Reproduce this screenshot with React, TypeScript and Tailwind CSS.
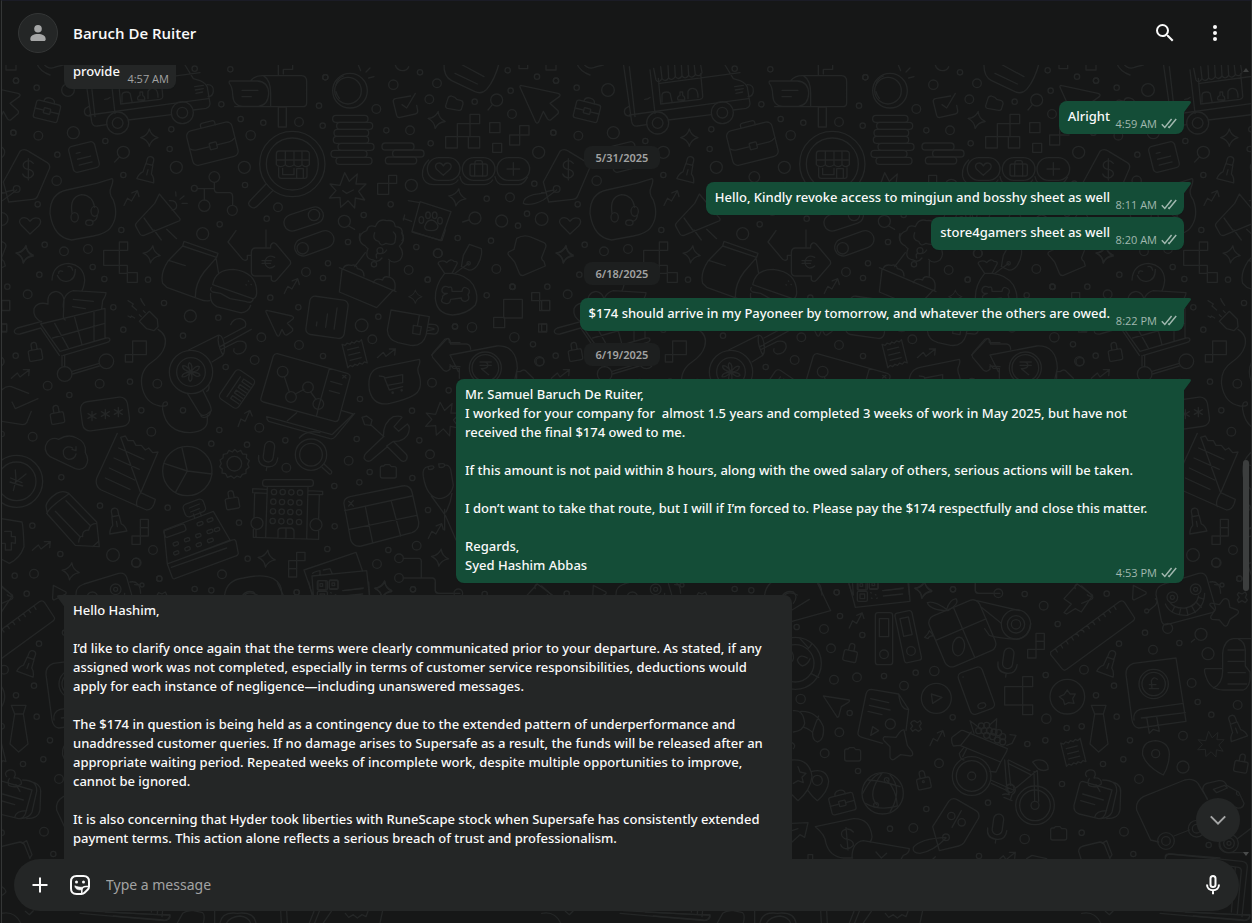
import React from "react";

/* ---------- wallpaper ---------- */

type Dot = [number, number, number];
type Box = [number, number, number, number, number?];

function Dots({ items }: { items: Dot[] }) {
  return (
    <>
      {items.map(([x, y, r], i) => (
        <circle key={i} cx={x} cy={y} r={r} />
      ))}
    </>
  );
}

function Boxes({ items }: { items: Box[] }) {
  return (
    <>
      {items.map(([x, y, w, h, r], i) => (
        <rect key={i} x={x} y={y} width={w} height={h} rx={r ?? 0} />
      ))}
    </>
  );
}

function Sparkle({ x, y, s = 26, a = 0 }: { x: number; y: number; s?: number; a?: number }) {
  return (
    <path
      transform={`translate(${x} ${y}) rotate(${a}) scale(${s / 26})`}
      d="M0-26Q5-6 26 0Q5 6 0 26Q-5 6-26 0Q-5-6 0-26Z"
    />
  );
}

function Trend({ x, y, a = 0 }: { x: number; y: number; a?: number }) {
  return (
    <path transform={`translate(${x} ${y}) rotate(${a})`} d="M-28 13L-10-3L-2 9L26-13M8-13L26-13L24 5" />
  );
}

function Padlock({ x, y, a = 0 }: { x: number; y: number; a?: number }) {
  return (
    <path
      transform={`translate(${x} ${y}) rotate(${a})`}
      d="M-15-8H15Q20-8 20-3V20Q20 25 15 25H-15Q-20 25-20 20V-3Q-20-8-15-8ZM-8-8V-22Q-8-30 0-30Q8-30 8-22V-8"
    />
  );
}

function Mic({ x, y }: { x: number; y: number }) {
  return (
    <g transform={`translate(${x} ${y}) rotate(8)`}>
      <rect x={-15} y={-44} width={30} height={62} rx={15} />
      <path d="M-29 2Q-29 32 0 32Q29 32 29 2M0 32V44" />
    </g>
  );
}

function MiniCase({ x, y, a = 14 }: { x: number; y: number; a?: number }) {
  return (
    <g transform={`translate(${x} ${y}) rotate(${a})`}>
      <rect x={-37} y={-26} width={74} height={54} rx={7} />
      <path d="M-37 0H-10M10 0H37M-16-26Q-16-40 0-40Q16-40 16-26" />
      <rect x={-10} y={-8} width={20} height={16} rx={2} />
    </g>
  );
}

function Ticket({ x, y, a = -14 }: { x: number; y: number; a?: number }) {
  return (
    <path
      transform={`translate(${x} ${y}) rotate(${a})`}
      d="M-30-36L-22-31L-15-36L-7-31L0-36L7-31L15-36L22-31L30-36V36L22 31L15 36L7 31L0 36L-7 31L-15 36L-22 31L-30 36ZM-18-16H16M-18 0H16M-18 16H16"
    />
  );
}

function PushPin({ x, y, a = 14 }: { x: number; y: number; a?: number }) {
  return (
    <path
      transform={`translate(${x} ${y}) rotate(${a})`}
      d="M-11-20H11L13 6Q24 14 26 30H-26Q-24 14-13 6ZM-10-20V-34Q-10-44 0-44Q10-44 10-34V-20M0-4V12"
    />
  );
}

function MiniFolder({ x, y }: { x: number; y: number }) {
  return (
    <path
      transform={`translate(${x} ${y})`}
      d="M-24-10Q-24-16-18-16H-14L-10-20H4L9-14H18Q24-14 24-8V14Q24 20 18 20H-18Q-24 20-24 14Z"
    />
  );
}

function Burst({ x, y, s = 1 }: { x: number; y: number; s?: number }) {
  return (
    <path
      transform={`translate(${x} ${y}) scale(${s})`}
      d="M-8-56L6-30L30-52L26-22L56-22L34 0L52 26L24 20L22 50L2 28L-20 48L-22 18L-54 20L-34-2L-52-22L-22-18Z"
    />
  );
}

function Doodles() {
  return (
    <g id="doodles" fill="none" stroke="#242626" strokeWidth={4} strokeLinejoin="round" strokeLinecap="round">
      <g transform="scale(0.33333)">
        <Dots
          items={[
            [48, 242, 8], [110, 263, 8], [204, 270, 19], [584, 206, 8], [691, 208, 8], [664, 313, 8], [976, 232, 8],
            [1180, 254, 14], [957, 317, 8], [1129, 327, 13], [897, 366, 13], [790, 368, 8], [722, 357, 8],
            [968, 377, 8], [752, 406, 14], [514, 388, 8], [509, 447, 8], [220, 398, 18], [115, 407, 13], [40, 398, 8],
            [316, 423, 8], [172, 464, 8], [170, 542, 14], [370, 525, 8], [529, 502, 18], [733, 502, 18], [735, 555, 8],
            [1159, 391, 8], [1230, 391, 13], [1234, 556, 18], [1172, 613, 8], [1091, 645, 8], [834, 622, 13],
            [800, 656, 8], [659, 673, 8], [608, 701, 18], [364, 690, 8], [113, 613, 8], [5, 657, 19],
            [643, 531, 16], [583, 565, 9], [613, 617, 17], [697, 631, 15], [370, 457, 18], [1033, 664, 18],
            [353, 369, 33], [353, 369, 16], [547, 338, 33], [547, 338, 16], [877, 492, 98], [877, 492, 78],
            [1050, 272, 52], [1044, 272, 40], [50, 567, 10], [942, 645, 17],
          ]}
        />
        <Boxes
          items={[
            [18, 180, 30, 30], [998, 346, 106, 21, 10], [1010, 367, 108, 21, 10], [1002, 388, 104, 21, 10],
            [1000, 409, 106, 21, 10], [1014, 430, 108, 21, 10], [993, 451, 108, 21, 10], [1008, 472, 108, 21, 10],
            [1146, 429, 96, 21, 10], [1178, 450, 94, 21, 10], [1156, 471, 94, 21, 10], [1166, 526, 24, 24],
            [1133, 550, 33, 33], [835, 321, 24, 60],
          ]}
        />
        <path d="M110 190Q120 215 150 225M130 190Q145 212 170 200L190 195" />
        {/* food truck */}
        <path d="M250 190L275 365Q278 380 292 378L320 374M385 360L514 344M580 330L618 325Q630 322 630 310L622 262Q618 250 600 242L580 236L555 195M268 200L285 350M330 210L345 340M268 345L520 310L625 296M355 235L362 312L480 298Q490 296 488 286L482 220M360 250L600 218M622 254Q642 254 640 274Q638 290 624 290M266 320Q250 325 254 340Q258 350 272 348M584 260L610 256M586 270L610 266M588 280L608 276M314 298Q325 298 330 292M366 306V284Q368 276 380 276Q392 276 392 288L396 304M414 300Q410 290 420 286V276H428V286Q436 290 434 300ZM444 296V274Q450 262 462 266Q474 268 474 292" />
        <path d="M341 205L348 240Q356 252 366 236Q376 248 386 234Q396 244 406 230Q416 242 426 228Q436 240 446 226Q456 238 466 224Q480 232 486 218L482 195M362 200L366 236M384 197L386 234M404 195L406 230M424 193L426 228M444 191L446 226M462 189L466 224" />
        {/* mail box */}
        <path d="M690 243H772Q805 245 806 280Q805 316 775 319H728Q700 318 698 285Q698 262 688 250Q686 243 690 243ZM752 242Q765 226 790 227H905Q920 228 920 245V308Q920 320 908 320H704M790 227Q812 240 812 280V320M726 271H774M726 290H754M835 195V226M850 222V208H878V195" />
        <path d="M1075 195L1082 212M1098 216L1110 204M1106 234L1122 230M1008 255Q1012 235 1030 228M1018 295Q1010 285 1008 275" />
        <MiniCase x={141} y={333} />
        <Sparkle x={448} y={413} />
        {/* large briefcase */}
        <g transform="translate(637 430) rotate(-14)">
          <rect x={-70} y={-52} width={140} height={106} rx={16} />
          <path d="M-70 0Q-60 8-50 8H-10M12 8H50Q60 8 70 0M-22-52V-60Q-22-66-14-66H14Q22-66 22-60V-52" />
          <rect x={-10} y={-2} width={22} height={20} rx={3} />
        </g>
        {/* note */}
        <g transform="translate(252 471) rotate(-14)">
          <rect x={-40} y={-40} width={80} height={80} rx={12} />
          <path d="M-20-16H-8M-20 2H20M-20 20H20" />
        </g>
        <path d="M358 471L344 486M798 552L752 600Q740 612 752 620Q762 628 772 618L818 572" />
        {/* shop in lens */}
        <path d="M838 453H918Q928 453 928 462V494Q916 506 906 494Q896 506 882 494Q866 506 856 494Q840 506 829 494V462Q829 453 838 453ZM829 480H928M856 453V494M882 453V494M906 453V494M836 503V528Q836 535 844 535H914Q921 535 921 528V503M848 505V524H882V505M890 535V506H910V535" />
        <PushPin x={443} y={513} />
        {/* price tag */}
        <path d="M60 454Q72 444 86 454L142 488Q152 494 148 506L112 590Q108 598 98 598L26 606L10 546ZM100 490Q92 480 84 482Q68 486 70 498Q74 508 86 508Q102 512 100 524Q94 534 84 534Q72 532 68 522M85 476V540M5 578L42 570" />
        <path d="M592 566H643M643 547V568Q644 578 654 578H690Q698 580 698 590V616M613 566V600" />
        {/* support bubble */}
        <path d="M336 536Q342 538 334 560Q324 580 340 600Q358 650 330 685Q318 700 280 708L215 720Q160 712 150 640Q150 580 200 570L290 550ZM216 640Q208 590 245 584Q278 586 284 622" />
        <ellipse cx={224} cy={652} rx={11} ry={14} />
        <ellipse cx={284} cy={634} rx={11} ry={15} />
        <ellipse cx={268} cy={668} rx={11} ry={8} />
        <path d="M292 645Q292 660 278 664" />
        <Trend x={393} y={594} a={-22} />
        {/* megaphone */}
        <path d="M478 582L540 656Q542 662 534 664L432 706Q424 708 420 702L408 680Q404 674 410 668L464 610ZM432 654L458 690M462 690L484 720M500 688L530 716M508 602Q528 600 530 616Q530 630 516 630M527 576L528 588M540 598L552 588M546 610H562" />
        <path d="M90 702L64 676Q52 662 66 654Q80 650 90 664Q100 650 116 655Q128 664 116 678Z" />
        <Burst x={1042} y={574} />
        <path d="M1028 572L1040 580L1060 570M1046 678L1064 688" />
        <rect x={850} y={632} width={122} height={50} rx={25} transform="rotate(-18 911 657)" />
        <path d="M1210 655L1235 664M1214 645L1210 660M1225 602L1260 608" />
        {/* poodle hair */}
        <path d="M1080 720Q1076 700 1100 692Q1104 672 1126 680Q1136 654 1160 662Q1184 658 1186 680Q1210 680 1206 702Q1214 712 1206 722" />
      </g>

      <g transform="translate(300 0) scale(0.33333)">
        <path d="M332 288L286 296Q278 298 280 306L290 346Q292 354 300 352L346 342Q354 340 353 332L350 316M306 314L320 324L346 280M286 195Q290 210 306 212Q322 212 326 200" />
        <Dots items={[[360, 217, 8], [76, 232, 8]]} />
      </g>

      <g transform="translate(420 60) scale(0.33333)">
        <Dots
          items={[
            [263, 31, 8], [351, 50, 8], [51, 70, 13], [28, 118, 13], [272, 92, 8], [230, 120, 18], [276, 162, 13],
            [164, 125, 8], [356, 277, 18], [32, 250, 8], [343, 371, 8], [270, 412, 13], [200, 416, 8], [321, 461, 8],
            [165, 474, 18], [245, 483, 18], [294, 497, 8], [113, 534, 8], [213, 542, 8], [54, 580, 13],
            [229, 627, 13], [23, 659, 8], [278, 681, 8], [400, 218, 8], [408, 62, 8],
          ]}
        />
        <Boxes
          items={[
            [150, 163, 29, 28], [77, 230, 35, 34], [145, 230, 34, 34], [112, 191, 38, 39], [209, 188, 31, 30],
            [218, 250, 27, 27], [299, 197, 28, 28], [269, 225, 30, 30], [297, 0, 26, 26],
            [22, 293, 98, 68, 34], [127, 293, 98, 68, 34], [231, 293, 98, 68, 34], [150, 312, 52, 36, 6],
          ]}
        />
        <path d="M26 300Q4 320 8 350Q14 374 40 374H90Q106 372 114 360M120 350Q124 374 144 374H194Q210 372 218 360M225 350Q230 374 248 374H296Q312 372 322 352" />
        <path d="M70 346L50 328Q42 316 52 310Q64 306 70 318Q76 306 88 310Q98 316 90 328ZM280 308V346M261 327H299M165 312V306Q166 302 170 302H182Q186 302 187 306V312M164 312V348M188 312V348" />
        <path d="M72 10Q70 50 95 62L165 95Q185 104 200 88Q225 60 240 0M105 40L172 72M122 12L192 50" />
        <path d="M300 82Q298 75 306 77L414 100Q424 103 418 110L390 130L414 152Q418 160 410 164L392 180Q386 182 382 176L370 154L356 186Q350 194 346 184Z" />
        <path d="M84 115Q86 108 94 108L104 112L110 118L124 122Q130 124 129 132L124 148Q122 152 116 151L82 145Q76 143 77 137ZM217 134L204 150M146 480L128 486" />
        <Sparkle x={50} y={180} a={10} />
        <Sparkle x={112} y={412} a={10} />
        <Sparkle x={434} y={584} a={10} />
        {/* paw card */}
        <path d="M0 425L93 455L62 542L-24 514L0 425M14 500Q20 480 34 480Q48 482 54 498Q54 512 34 512Q14 512 14 500Z" />
        <ellipse cx={4} cy={480} rx={7} ry={10} />
        <ellipse cx={24} cy={466} rx={7} ry={10} />
        <ellipse cx={44} cy={466} rx={7} ry={10} />
        <ellipse cx={60} cy={482} rx={7} ry={10} />
        <path d="M290 535Q312 522 335 532L372 548Q380 552 377 562L366 590Q362 598 372 604L376 618L310 646Q302 648 298 640L284 606L272 592Q260 582 266 576L282 568Z" />
        <path d="M148 553L184 566Q188 590 172 616Q160 632 146 630L124 620L130 586ZM146 610L105 640" />
        <circle cx={146} cy={610} r={5} />
        <path d="M310 430Q310 412 340 404L380 398M310 430Q330 440 370 420L410 390" />
      </g>

      <g transform="translate(0 230) scale(0.33333)">
        <Dots
          items={[
            [134, 44, 8], [192, 64, 13], [264, 57, 13], [278, 111, 8], [118, 134, 8], [22, 170, 8], [83, 193, 13],
            [313, 147, 8], [444, 149, 8], [340, 232, 8], [492, 219, 8], [370, 299, 8], [549, 317, 8], [571, 258, 18],
            [655, 263, 8], [784, 322, 13], [764, 390, 13], [677, 411, 8], [472, 461, 13], [390, 455, 8],
            [299, 461, 13], [47, 377, 8], [143, 467, 13], [208, 495, 8], [424, 541, 8], [549, 541, 8], [454, 605, 13],
            [98, 620, 13], [658, 600, 8], [778, 593, 13], [741, 644, 8], [634, 641, 8], [856, 631, 8], [811, 203, 8],
            [895, 232, 8], [984, 100, 8], [918, 126, 13], [969, 144, 8], [1044, 36, 8], [1122, 103, 8],
            [1249, 51, 8], [1313, 70, 13], [1226, 120, 13], [1283, 149, 8], [1365, 289, 8], [1135, 260, 8],
            [1085, 286, 19], [1117, 328, 13], [897, 345, 13], [969, 378, 8], [1296, 458, 13], [1346, 481, 8],
            [1080, 507, 8], [1236, 542, 8], [1070, 627, 8], [1258, 631, 8], [1290, 673, 13], [1046, 692, 13],
            [859, 713, 13], [0, 395, 12], [5, 612, 8],
            [194, 432, 22], [319, 394, 22], [573, 426, 65], [573, 426, 43], [848, 425, 16], [873, 501, 16],
            [924, 472, 16], [955, 522, 16], [933, 674, 47], [933, 674, 34], [908, 55, 17], [1140, 62, 9],
          ]}
        />
        <Boxes
          items={[
            [358, 36, 25, 25], [311, 61, 47, 45], [358, 106, 24, 24], [382, 128, 30, 29], [5, 211, 24, 30],
            [5, 282, 15, 22], [398, 333, 41, 41], [376, 374, 22, 22],
          ]}
        />
        <Sparkle x={74} y={72} a={8} />
        <Sparkle x={455} y={73} a={8} />
        <Sparkle x={1246} y={200} s={20} />
        {/* cart */}
        <path d="M156 150Q158 104 205 100Q252 106 254 150Q252 172 246 182M176 130Q176 120 188 124M204 110Q214 106 218 120M172 136Q180 156 200 154Q226 152 226 118M124 276Q98 262 102 236Q112 214 144 222Q140 188 168 184Q190 188 192 210L190 262M190 232Q188 190 220 182L318 188Q318 196 308 212L305 236M220 208L280 214M218 230L256 236M122 282L315 235V322M190 262Q192 270 196 270M125 274L52 294Q40 300 44 308Q48 314 60 312L122 294L178 376M122 282L180 364L318 324Q330 322 330 330Q328 336 320 338L190 376M164 280L206 356M224 262L246 344M282 246V332M158 324L314 280M186 376V408M194 376V410M216 424L298 400M218 432L298 408" />
        {/* plug and cable */}
        <path d="M418 274L448 244L472 268L474 290L462 302L440 296ZM474 298Q504 316 494 350Q486 376 456 396Q420 420 425 465Q434 520 480 528Q510 530 500 516Q486 512 488 538Q498 606 570 608Q624 604 622 570V556M384 212L400 222L396 228L410 240M422 206L428 218L424 212L434 226M384 258L392 262L394 258L404 264M418 254L424 260M430 242L436 248" />
        {/* paper bag and burger */}
        <path d="M552 34L654 70L650 82L548 48ZM548 48L505 92Q480 130 488 160L500 172L600 208Q612 214 630 212M508 92L556 107M650 82L612 126Q586 160 586 200M648 84L656 130" />
        <path d="M638 164Q646 118 700 118Q772 126 770 190Q768 206 758 206ZM634 172Q628 180 638 186L662 190L690 206L736 214Q758 222 760 206M632 190Q628 218 650 230L720 248Q744 250 752 226M738 164L739 165M745 153L746 154M753 163L754 164" />
        {/* arrows */}
        <path d="M708 2L684 36L728 88Q736 94 742 88V76H754M798 0V50M766 54H812V46Q818 34 828 42L870 92Q874 98 870 104L830 150Q822 158 814 150V138H768Q754 138 754 126V66Q756 54 766 54ZM824 82Q804 72 796 90Q792 108 808 114Q818 114 824 108M786 92H814M786 100H812" />
        <Trend x={874} y={168} a={-22} />
        <Trend x={62} y={432} />
        <Trend x={1160} y={370} />
        <Trend x={733} y={565} a={-28} />
        <rect x={882} y={14} width={122} height={52} rx={26} transform="rotate(-20 943 40)" />
        {/* plant crate */}
        <path d="M1018 113L1188 185M1026 118L1018 186L1130 233L1180 180M1030 114Q1036 102 1054 106Q1070 102 1072 116Q1092 118 1092 138M1120 158Q1126 142 1148 150Q1150 136 1170 142Q1190 150 1184 180M1064 110L1096 68M1168 138V92M1080 10Q1072 36 1096 48Q1100 54 1104 56Q1092 86 1120 90Q1134 100 1146 84M1206 8Q1218 32 1198 48Q1216 70 1200 90Q1180 104 1166 88M1124 8Q1116 30 1136 34Q1142 52 1158 40Q1188 50 1186 26Q1190 14 1180 6M1130 84Q1126 70 1134 70M1146 70Q1154 70 1160 60" />
        <path d="M1236 6L1326 32L1336 0" />
        {/* sack */}
        <path d="M1318 106Q1310 98 1320 94Q1334 90 1340 98Q1352 84 1362 94Q1376 94 1370 104L1356 130L1334 130ZM1334 130Q1305 165 1306 205Q1310 252 1358 255Q1402 252 1426 225Q1438 200 1420 165Q1400 134 1356 130" />
        <path d="M1342 190Q1324 192 1326 178Q1332 164 1346 172Q1356 168 1356 180L1356 184H1386Q1388 168 1400 174Q1414 180 1404 194Q1412 210 1396 214Q1384 214 1384 204L1352 208Q1350 224 1336 220Q1318 216 1328 204Q1324 196 1342 190Z" />
        {/* cursor, chart tile, mug */}
        <path d="M798 246Q796 240 804 242L876 258Q884 262 878 268L862 280L878 296Q880 302 874 306L862 314Q856 318 852 310L846 298L838 316Q834 322 830 314Z" />
        <g transform="translate(981 262) rotate(8)">
          <rect x={-58} y={-58} width={116} height={116} rx={16} />
          <path d="M-28 30V18M0 30V-10M26 32V-32" />
        </g>
        <path d="M1173 240L1288 260L1278 316Q1268 350 1232 346L1194 338Q1164 330 1162 300ZM1258 256L1252 288M1240 286L1264 290L1260 314L1238 310ZM1284 282L1306 284Q1316 288 1315 300Q1312 314 1300 312L1280 310M1286 292L1302 296M1284 302L1302 298" />
        <Ticket x={1064} y={371} />
        {/* hair dryer */}
        <path d="M566 360L654 316Q666 312 672 340Q676 368 668 376L636 396M656 316Q650 340 668 374M562 490L600 552Q610 560 622 552L634 542Q634 534 628 520L608 480M602 552Q602 564 614 562Q630 560 632 544M672 324L736 290Q742 272 722 266Q700 264 692 284M660 350L754 298M664 358L712 334Q742 330 738 354Q732 372 712 372Q698 368 702 356M620 484Q630 480 626 464" />
        <path d="M573 426Q560 404 568 398Q580 404 573 426Q588 404 598 410Q598 424 573 426Q600 428 600 436Q590 446 573 426Q580 450 570 454Q560 446 573 426Q556 444 546 440Q546 428 573 426Q546 420 548 408Q560 404 573 426" />
        {/* comb */}
        <g transform="translate(711 477) rotate(34)">
          <rect x={-34} y={-52} width={68} height={104} rx={12} />
          <path d="M30-36H0V-26H30M30-16H0V-6H30M30 4H0V14H30M30 24H0V34H30M-12-36V36" />
        </g>
        {/* laptop */}
        <path d="M820 378Q824 370 832 371L1042 430Q1052 434 1050 442L1016 568Q1012 576 1004 574L790 516Q780 512 783 504ZM988 416L956 530L950 556M853 440L868 486M886 492L912 478M932 486L948 508M992 454L1026 464M988 482L1018 490M1028 436L1038 444M1038 436L1028 444M890 548L862 572M800 560L996 614L1060 552L1026 542M800 560Q800 570 806 574L990 626Q1000 628 1006 620L1064 550" />
        {/* cart bubble */}
        <path d="M1258 388Q1262 394 1256 408Q1250 420 1258 436Q1270 480 1240 496Q1220 508 1170 520Q1120 530 1108 480Q1100 420 1140 412ZM1138 438L1152 440L1168 480L1208 470M1154 444L1208 434V458L1162 466" />
        <Dots items={[[1178, 488, 2], [1205, 481, 2]]} />
        <path d="M1380 410L1350 408V418Q1340 428 1330 420L1298 382Q1294 376 1298 370L1334 328Q1344 322 1348 332V338H1380" />
        <Burst x={1328} y={570} s={0.95} />
        {/* tools */}
        <path d="M1086 562L1100 558L1116 570L1112 586L1094 584ZM1112 584L1152 620M1162 650L1112 692Q1098 698 1092 684Q1092 676 1098 670L1150 620Q1150 576 1180 560Q1200 556 1206 562L1182 590L1196 604L1222 582Q1234 592 1222 616Q1206 636 1180 634L1160 648L1204 692Q1214 698 1220 688Q1224 678 1218 672L1182 636" />
        <Padlock x={105} y={367} a={-10} />
        <Padlock x={171} y={556} a={-10} />
        {/* checkbox, password, cloud */}
        <path d="M5 480Q20 466 34 470L86 490M5 574L68 584Q76 584 80 578L94 544M36 516L46 536L114 506" />
        <rect x={244} y={508} width={142} height={88} rx={22} transform="rotate(-8 315 552)" />
        <path d="M276 544V572M264 551L288 565M288 551L264 565M316 538V566M304 545L328 559M328 545L304 559M355 532V560M343 539L367 553M367 539L343 553" />
        <path d="M150 680Q126 660 142 636Q156 620 176 628Q206 610 230 624Q260 636 256 668Q270 690 256 710Q246 722 226 716ZM218 654Q200 644 190 662Q188 684 206 688Q224 688 228 672M228 650V662L216 658" />
      </g>

      <g transform="translate(300 230) scale(0.33333)">
        <Dots items={[[643, 322, 14], [699, 343, 8], [718, 394, 14], [556, 414, 48], [556, 414, 40], [637, 170, 8]]} />
        <path d="M395 375L440 327Q446 322 450 332L452 342H500Q512 344 512 358M478 445V415H460L450 404M450 375L590 348Q650 345 652 415L645 445M450 375L475 425M650 445V425H660Q672 415 680 425L700 445M540 396H574M540 406H574M540 396Q564 394 564 406Q562 416 544 416L566 434" />
      </g>

      <g transform="translate(450 280) scale(0.33333)">
        <Dots items={[[110, 46, 8], [187, 20, 8], [15, 140, 8], [66, 142, 14]]} />
        <Boxes items={[[161, 58, 56, 56], [131, 112, 33, 31], [245, 38, 24, 24], [269, 62, 30, 30], [266, 132, 24, 24]]} />
      </g>

      <g transform="translate(0 430) scale(0.33333)">
        <Dots
          items={[
            [184, 142, 8], [300, 227, 8], [503, 233, 8], [97, 287, 8], [181, 372, 8], [339, 375, 19], [408, 398, 13],
            [459, 360, 13], [102, 431, 13], [44, 437, 8], [478, 446, 8], [666, 433, 13], [743, 386, 8],
            [717, 278, 8], [634, 481, 8], [584, 477, 8], [50, 154, 78], [50, 154, 58], [562, 123, 74],
            [703, 101, 22], [771, 280, 18], [948, 284, 18], [1003, 168, 8], [1004, 289, 8], [982, 357, 8],
            [1131, 402, 13], [1165, 360, 8], [1250, 347, 13], [1284, 240, 8], [1237, 144, 8], [1078, 157, 8],
            [1109, 126, 8], [1197, 385, 13], [1197, 444, 13], [1239, 478, 8], [890, 487, 8],
          ]}
        />
        <Dots
          items={[
            [822, 186, 8], [848, 186, 8], [874, 187, 8], [900, 188, 8], [820, 215, 8], [846, 216, 8], [872, 217, 8],
            [898, 218, 8], [819, 244, 8], [845, 245, 8], [871, 246, 8], [897, 247, 8], [818, 273, 8], [844, 274, 8],
            [870, 275, 8], [897, 276, 8],
          ]}
        />
        <Boxes
          items={[
            [421, 268, 24, 25], [421, 293, 24, 25], [396, 318, 25, 25], [890, 367, 25, 25], [866, 392, 24, 24],
            [866, 416, 24, 25], [788, 149, 152, 20, 8],
          ]}
        />
        {/* receipt */}
        <path d="M352 10L290 145Q284 168 304 180L440 240Q460 240 466 208L422 188Q404 216 412 230M422 188L474 66L458 68L446 54L436 60L424 46L408 46L400 32L384 32L376 18L362 22ZM356 54L432 88M342 84L418 118M328 114L404 150M316 144L390 178" />
        <path d="M562 123L546 54M562 123L636 132M562 123L526 188M562 123L492 100" />
        <path d="M46 120L48 150L40 182M78 132L48 156M32 144L66 158M30 156L68 168" />
        <path d="M704 58L712 66L722 61L728 72L740 73L739 84L748 92L743 102L747 112L738 119L738 130L727 133L721 142L711 138L702 145L693 138L682 142L677 131L666 129L667 118L659 110L664 101L660 90L669 84L670 73L681 71L687 61L697 66Z" />
        <Mic x={805} y={78} />
        <path d="M898 24Q920 -2 960 8M966 112L988 132Q996 134 995 124L972 102" />
        {/* pencil */}
        <path d="M138 228Q140 210 170 190Q190 180 206 190L290 276L298 350L226 346L142 252ZM166 244L240 320M198 212L272 288M140 250Q150 230 206 192M236 336Q238 316 248 320Q246 300 266 300Q270 280 290 280M278 350L296 334" />
        <PushPin x={350} y={278} a={-10} />
        <Padlock x={696} y={212} a={-10} />
        <Trend x={125} y={348} />
        <Trend x={1306} y={303} a={-22} />
        <path d="M5 266L66 276Q70 290 72 350Q60 385 28 400L5 388M14 304H34V320H46V340L34 338V360H16V340H5" />
        <Sparkle x={212} y={424} a={8} />
        <Sparkle x={800} y={386} a={8} />
        <Sparkle x={1320} y={383} a={8} />
        <Sparkle x={1150} y={478} a={8} />
        {/* cash register */}
        <path d="M492 300L640 244L690 330L502 402ZM502 402L698 330Q704 326 708 334L715 370Q714 376 708 378L524 446Q518 448 516 440ZM514 412L680 354M580 252L584 264M600 246L604 258" />
        <rect x={-32} y={-20} width={64} height={40} rx={12} transform="translate(583 234) rotate(-20)" />
        <path d="M568 234L598 222M572 246L598 236" />
        <g transform="rotate(-20 560 320)">
          <Boxes
            items={[
              [500, 280, 66, 22, 6], [602, 292, 18, 10, 4], [634, 292, 18, 10, 4], [514, 324, 16, 10, 4],
              [550, 324, 16, 10, 4], [586, 324, 16, 10, 4], [622, 324, 18, 10, 4], [506, 350, 16, 10, 4],
              [542, 350, 16, 10, 4], [578, 350, 16, 10, 4], [614, 350, 18, 10, 4], [645, 326, 16, 10, 4],
            ]}
          />
        </g>
        {/* office */}
        <path d="M802 170L797 320M924 172L920 326M758 176L800 178M758 176V188L800 190M924 182L968 184V194L924 193M764 190L762 262M768 298V322M958 195L956 266M956 302V328L760 322V298M834 322V300Q836 294 844 294H874Q882 296 882 304V324M858 294V322" />
        {/* browser table */}
        <path d="M1032 222Q1030 205 1050 200L1206 168Q1230 164 1236 186L1256 276Q1258 300 1236 308L1084 348Q1060 352 1052 330ZM1034 242L1236 198M1048 298L1250 256M1096 230L1118 338M1174 214L1202 318M1046 214L1060 228M1060 212L1046 228" />
        <MiniFolder x={1165} y={124} />
        {/* stethoscope and wiring */}
        <path d="M1284 110Q1266 112 1270 140Q1280 200 1316 206Q1352 204 1360 166L1352 118Q1346 102 1334 106M1284 110Q1300 104 1302 112Q1298 120 1286 118ZM1316 102Q1334 98 1334 106Q1332 114 1318 112ZM1294 198L1336 256L1368 330M1356 190Q1352 220 1338 246M1334 238V300M1210 385H1258Q1264 386 1264 394V442M1210 444H1298Q1306 446 1306 454V482Q1306 490 1316 490H1380" />
        {/* posters */}
        <path d="M912 420L1068 367L1088 424M912 420L938 495M936 438L1100 422L1108 495M936 438L940 495M1030 482L1090 474M938 430Q940 426 960 422V434M970 420L990 416L996 430" />
        <Boxes items={[[952, 452, 26, 28, 3], [988, 450, 26, 26, 3], [960, 461, 8, 8], [996, 459, 8, 8]]} />
        <path d="M674 495Q680 450 730 444Q790 430 820 446Q846 460 846 495M734 495Q746 482 772 495" />
        <path d="M5 468L36 496Q42 504 34 508L5 520" />
      </g>

      <g transform="translate(240 560) scale(0.33333)">
        <Dots
          items={[
            [170, 97, 8], [180, 168, 8], [132, 207, 13], [50, 201, 8], [153, 265, 13], [247, 225, 8], [162, 359, 13],
            [231, 352, 13], [312, 348, 8], [372, 377, 13], [407, 338, 8], [463, 333, 14], [62, 417, 14],
            [209, 459, 8], [178, 517, 13], [331, 492, 15], [134, 580, 13], [234, 633, 8], [477, 610, 13],
            [518, 472, 8], [519, 88, 8], [655, 100, 13], [734, 102, 8], [791, 137, 13], [833, 192, 8], [797, 345, 8],
            [799, 476, 14], [742, 552, 8], [796, 541, 8], [860, 504, 8], [905, 499, 8], [948, 406, 8],
            [1002, 377, 8], [1010, 470, 8], [912, 329, 13], [1017, 251, 8], [980, 101, 8], [1095, 218, 8],
            [1119, 269, 13], [1198, 249, 8], [1263, 223, 18], [1284, 281, 18], [1235, 369, 13], [1253, 426, 8],
            [1294, 464, 8], [1373, 435, 13], [1209, 527, 13], [1209, 621, 18], [1050, 541, 8], [969, 612, 8],
            [1030, 598, 8], [1077, 657, 13], [846, 672, 8], [905, 818, 8], [1032, 815, 13], [1060, 882, 8],
            [734, 837, 14], [597, 888, 8], [400, 804, 13], [330, 806, 8], [439, 747, 8], [624, 728, 8],
            [1286, 855, 8], [1378, 56, 8], [1309, 8, 14],
            [312, 283, 13], [393, 273, 13], [708, 193, 44], [708, 193, 26], [708, 193, 14], [469, 415, 45],
            [862, 410, 52], [1121, 372, 44], [1121, 372, 35], [575, 648, 58], [575, 648, 46], [575, 648, 12],
            [765, 736, 58], [765, 736, 46], [765, 736, 12], [308, 700, 62], [1127, 581, 12], [112, 661, 15],
            [1163, 205, 15], [1100, 153, 6], [1326, 75, 6], [1177, 112, 16], [1177, 112, 6], [1247, 88, 16],
            [1247, 88, 6], [1158, 843, 25], [1158, 843, 13], [1250, 806, 25], [1250, 806, 13], [1347, 850, 28],
            [1347, 850, 16], [1347, 850, 6], [498, 832, 10], [514, 768, 11], [545, 787, 11], [288, 735, 7], [320, 660, 7],
            [46, 310, 78], [46, 310, 56],
          ]}
        />
        <Boxes
          items={[
            [286, 158, 52, 156, 8], [298, 176, 28, 54], [768, 220, 25, 24], [768, 244, 25, 24], [743, 268, 25, 26],
            [728, 350, 30, 30], [674, 380, 54, 55], [728, 435, 30, 29], [234, 62, 28, 28, 3], [268, 62, 26, 26, 3],
            [232, 94, 30, 30, 4], [240, 102, 14, 14],
          ]}
        />
        <Sparkle x={430} y={90} a={10} />
        <Trend x={228} y={181} a={-24} />
        <Trend x={470} y={534} a={-24} />
        <Trend x={680} y={890} />
        <path d="M5 110Q18 90 40 96Q56 110 40 130M36 150L88 118M112 68L152 152L36 184M206 66L226 142L390 124L386 66M308 92L368 86M310 108L368 102M272 98L274 99M286 104L288 105M274 114L276 115M292 114L290 115M586 66V92Q588 100 596 100H640" />
        <g transform="translate(385 232) rotate(-12)">
          <rect x={-26} y={-78} width={52} height={152} rx={8} />
          <rect x={-13} y={-60} width={26} height={54} />
        </g>
        {/* gift */}
        <g transform="translate(547 220) rotate(-23)">
          <rect x={-82} y={-82} width={164} height={164} rx={22} />
          <path d="M-82-12H82M6-82V82" />
          <ellipse cx={-26} cy={32} rx={18} ry={28} transform="rotate(30 -26 32)" />
        </g>
        <path d="M502 152Q450 150 442 128Q460 120 500 148Q508 120 528 116Q540 130 504 152M590 122L720 152M604 142L664 190M614 206L628 226Q650 234 710 238M752 190Q748 230 712 238M434 232Q446 222 448 212Q456 220 460 228Q448 226 444 236Z" />
        <Padlock x={212} y={280} a={12} />
        <Mic x={683} y={308} />
        <Mic x={652} y={806} />
        <PushPin x={985} y={314} a={20} />
        <PushPin x={1368} y={508} a={-20} />
        <path d="M852 158L874 132L852 116L892 72L938 106L904 156L886 146L860 162ZM890 72Q882 76 886 86M938 106Q930 112 922 104M1060 76L1098 96Q1100 102 1094 104L1062 120Q1056 118 1058 110ZM1244 238L1234 246" />
        {/* ruler */}
        <path d="M812 276L1020 124Q1028 120 1034 128L1064 174Q1064 180 1058 184L860 328Q852 334 846 326L812 284ZM826 266L832 276M842 254L848 264M858 242L864 252M874 230L880 240M890 220L896 228M906 208L912 216M922 196L928 206M938 184L944 194M954 172L960 182M970 160L976 170M986 150L992 158M1002 138L1008 148" />
        {/* robot */}
        <path d="M1152 72L1256 40Q1274 36 1280 52L1306 142Q1308 154 1296 158L1160 194Q1148 196 1144 182L1128 104Q1126 82 1152 72ZM1156 132Q1170 166 1220 166Q1272 154 1274 100M1168 124Q1180 146 1216 144Q1250 138 1256 108M1184 140L1176 156M1202 146L1198 164M1220 146L1224 166M1236 140L1246 158M1250 128L1264 142M1256 112L1272 118M1290 66Q1320 60 1322 100M1304 74L1320 75M1106 152L1126 136Q1136 122 1126 116" />
        <path d="M1330 118Q1340 112 1346 122L1350 142L1372 150Q1380 156 1370 164L1350 178L1342 196Q1336 202 1330 194L1318 180L1296 178Q1288 172 1296 164L1304 150L1290 136Q1288 128 1298 130L1318 134Z" />
        <path d="M1376 98L1386 102L1396 96L1400 104L1396 112L1402 120L1396 128L1386 122L1376 128L1372 120L1378 112L1372 104Z" />
        {/* scroll */}
        <path d="M1328 330V280Q1332 240 1360 236H1416M1328 326H1276Q1270 330 1278 350Q1290 390 1330 390H1390Q1414 380 1410 336L1396 318V270Q1394 244 1376 238M1328 326Q1330 370 1300 384M1344 270H1392M1344 304H1392M1344 338H1396M1344 372H1400" />
        {/* phone */}
        <g transform="translate(589 392) rotate(-20)">
          <rect x={-38} y={-66} width={76} height={132} rx={14} />
          <ellipse cx={0} cy={48} rx={12} ry={8} />
          <path d="M-24-52L-23-52" />
        </g>
        <path d="M454 402L486 412L458 430ZM862 390L870 402L886 402L878 416L882 430L866 428L854 434L850 420L838 410L852 404ZM130 408L208 420Q210 424 204 428L184 440L176 470L172 472Z" />
        {/* story card */}
        <path d="M356 402L274 388Q262 388 258 402L234 518Q232 528 246 532L308 550M356 402L386 448L378 512M356 402Q362 452 386 448M272 416L326 428M268 436L330 450M264 454L306 464M278 500L296 512L272 526ZM372 510Q366 508 358 518L348 532L314 530Q306 534 312 542L330 560L330 592Q334 602 342 598L362 584L392 588Q402 586 396 574L382 556Z" />
        <path d="M396 484L404 482L412 488L420 482L424 490L418 498L424 508L416 514L406 508L398 514L392 506L398 498L392 490Z" />
        {/* pound book */}
        <path d="M1060 310L1188 294L1218 484L1076 504Q1060 502 1056 480L1038 344Q1036 320 1060 310ZM1062 480Q1058 456 1080 448L1210 430M1084 474L1216 458M1100 472L1108 520L1120 508L1138 514L1130 470M1132 358Q1120 348 1114 362L1116 386H1108H1136M1108 374H1128" />
        {/* tie, ticket */}
        <path d="M934 436H978L970 462H944ZM944 462L930 552L956 576L984 552L970 462" />
        <Ticket x={880} y={577} />
        {/* bicycle */}
        <path d="M516 532L542 512Q548 510 556 514L682 566L680 574L662 606L540 556L520 558Q512 544 516 532ZM542 556L574 516M552 562L538 580Q540 598 552 600M560 566L548 590M570 482L582 520M572 484L594 500M628 496L650 476L648 512M690 524L708 526L696 550L680 556M662 606L648 636M630 634L646 636M632 660L700 690L770 632M634 670L690 696M674 600L680 680M684 602L692 676M686 600L750 632M762 634L764 724M772 632L776 724M688 612L752 644M758 606Q770 596 790 602Q806 610 804 628Q788 636 774 626ZM672 712L696 722M668 704Q676 700 688 704L680 678Q690 666 702 678Q712 694 696 704L692 716" />
        <Dots
          items={[
            [604, 498, 9], [620, 496, 9], [596, 512, 9], [612, 512, 9], [628, 512, 9], [642, 516, 9], [620, 526, 9],
            [638, 530, 9], [656, 518, 9], [668, 530, 9], [652, 540, 9], [668, 546, 9], [690, 686, 12],
          ]}
        />
        <MiniCase x={187} y={730} a={-14} />
        <MiniFolder x={218} y={583} />
        <MiniFolder x={836} y={820} />
        <Padlock x={430} y={662} a={-12} />
        <Padlock x={1384} y={612} a={10} />
        <Dots items={[[430, 665, 3]]} />
        <Burst x={1292} y={555} s={0.72} />
        <path d="M264 660Q300 660 360 680M248 700Q280 640 306 640M330 644Q370 690 330 756M256 730Q300 754 352 738M290 734Q260 700 306 640M320 660Q350 690 352 738" />
        {/* map pins */}
        <path d="M1150 645Q1100 620 1088 585Q1084 545 1126 542Q1168 546 1168 584Q1166 620 1150 645ZM36 600Q90 596 96 650Q92 690 54 722L36 704M54 620L60 636L78 640L66 652L70 668L54 662L40 670M96 634Q140 624 146 664Q144 696 112 722Q96 710 84 692" />
        <path d="M40 452Q70 448 74 490Q70 512 40 516M62 454Q110 452 130 500Q134 540 112 546Q96 540 98 518Q90 508 72 502M116 468Q106 490 98 516M36 548Q50 556 40 566" />
        <path d="M36 276Q46 296 34 306M82 294Q60 280 52 300Q56 314 68 318Q84 312 90 296M60 236L84 262M96 250Q90 262 84 266M92 340L116 352" />
        {/* sticky notes */}
        <path d="M908 664L996 690L976 762Q970 776 956 776L898 762Q880 756 882 736L898 676Q900 664 908 664ZM944 772Q948 752 980 752M968 660Q1012 660 1010 694L996 756Q990 772 964 776M990 664Q1024 670 1022 696L1020 750Q1016 776 980 776M908 702L970 720M902 722L944 734M920 650Q910 636 928 630Q946 628 946 644L942 654Q966 652 964 672Q946 686 926 676Q922 664 928 656M948 674L960 694" />
        {/* discount tag */}
        <path d="M458 800L506 724Q516 712 530 718L588 752Q600 760 596 774L552 848Q546 856 536 858L478 872ZM544 752L516 802M498 832Q420 836 400 862Q396 880 420 880Q460 874 498 834" />
        <path d="M106 800L220 776Q270 774 276 830Q276 840 270 846M106 800Q136 824 138 850Q150 890 190 894H218M216 894Q216 846 250 842L388 866Q388 880 370 886L364 896M220 816Q210 804 196 808Q180 814 186 828Q192 838 204 838Q222 842 220 856Q210 868 196 866Q184 862 182 854M198 802L204 870M288 876L304 894L320 880" />
        <path d="M36 790L84 788L74 832L60 824L36 846M36 812L54 806M84 898V884H98V898" />
        {/* wagon */}
        <path d="M1136 846L1112 840L1070 750Q1066 724 1090 710L1214 660Q1240 654 1254 670L1282 716M1182 828L1228 810M1268 690Q1268 670 1290 668L1316 662Q1334 660 1340 676L1376 696L1392 730Q1390 746 1372 744L1350 736M1268 690L1282 718M1300 688L1334 676L1342 684L1310 698ZM1370 696Q1368 706 1376 706M1320 840Q1310 870 1340 878H1400M1372 836L1420 800" />
        <path d="M896 874Q896 862 910 858L960 846Q970 846 974 856L990 896M966 850L980 842L996 884L990 894M896 874L904 900M456 900L466 890M1156 900V888Q1158 882 1168 882L1320 894M740 896L756 886L800 896" />
      </g>

      <g transform="translate(-40 780) scale(0.33333)">
        <path d="M376 234Q378 222 392 222L606 244Q622 246 622 260L606 410M440 240L596 262Q604 264 604 272L592 400M436 396L596 404H630V412Q626 422 612 422L360 400M586 262L574 396M196 394L208 404L220 392" />
      </g>
      <g transform="translate(0 780) scale(0.33333)">
        <path d="M5 400Q44 392 62 429M250 392L510 406Q506 422 490 420L340 408M532 429L548 400Q560 390 580 392L608 398Q616 404 610 429M644 429V392M660 429Q666 394 712 400Q762 394 768 429M680 429Q690 410 720 408Q744 410 752 429M842 392L844 429M860 392L862 429M928 429L942 394M944 429L958 394M970 429L994 394M1036 400L1046 412L1060 404L1072 414L1086 404L1098 410L1104 394M1140 429L1148 392M5 346Q18 340 18 334Q16 326 5 320" />
      </g>
    </g>
  );
}

function Wallpaper() {
  return (
    <svg aria-hidden="true" className="pointer-events-none absolute inset-0 h-full w-full">
      <defs>
        <Doodles />
      </defs>
      <use href="#doodles" x={-542} y={-1} />
      <use href="#doodles" x={-2} y={-1} />
      <use href="#doodles" x={538} y={-1} />
      <use href="#doodles" x={1078} y={-1} />
      <use href="#doodles" x={1618} y={-1} />
    </svg>
  );
}

/* ---------- messages ---------- */

type Message = {
  kind: "message";
  out: boolean;
  tail: boolean;
  text: string;
  time?: string;
  gap?: boolean;
  wide?: boolean;
};
type DateMark = { kind: "date"; label: string };

const thread: (Message | DateMark)[] = [
  { kind: "message", out: true, tail: true, text: "Alright", time: "4:59 AM", gap: true },
  { kind: "date", label: "5/31/2025" },
  {
    kind: "message",
    out: true,
    tail: true,
    text: "Hello, Kindly revoke access to mingjun and bosshy sheet as well",
    time: "8:11 AM",
  },
  { kind: "message", out: true, tail: false, text: "store4gamers sheet as well", time: "8:20 AM" },
  { kind: "date", label: "6/18/2025" },
  {
    kind: "message",
    out: true,
    tail: true,
    text: "$174 should arrive in my Payoneer by tomorrow, and whatever the others are owed.",
    time: "8:22 PM",
  },
  { kind: "date", label: "6/19/2025" },
  {
    kind: "message",
    out: true,
    tail: true,
    wide: true,
    text: `Mr. Samuel Baruch De Ruiter,
I worked for your company for  almost 1.5 years and completed 3 weeks of work in May 2025, but have not
received the final $174 owed to me.

If this amount is not paid within 8 hours, along with the owed salary of others, serious actions will be taken.

I don’t want to take that route, but I will if I’m forced to. Please pay the $174 respectfully and close this matter.

Regards,
Syed Hashim Abbas`,
    time: "4:53 PM",
  },
  {
    kind: "message",
    out: false,
    tail: true,
    gap: true,
    wide: true,
    text: `Hello Hashim,

I’d like to clarify once again that the terms were clearly communicated prior to your departure. As stated, if any
assigned work was not completed, especially in terms of customer service responsibilities, deductions would
apply for each instance of negligence—including unanswered messages.

The $174 in question is being held as a contingency due to the extended pattern of underperformance and
unaddressed customer queries. If no damage arises to Supersafe as a result, the funds will be released after an
appropriate waiting period. Repeated weeks of incomplete work, despite multiple opportunities to improve,
cannot be ignored.

It is also concerning that Hyder took liberties with RuneScape stock when Supersafe has consistently extended
payment terms. This action alone reflects a serious breach of trust and professionalism.


`,
  },
];

function Ticks() {
  return (
    <svg viewBox="0 0 16 11" className="h-[11px] w-4" fill="none" stroke="currentColor" strokeWidth={1.5}>
      <path d="M0.8 6.2L3.8 9.4L10.6 1" />
      <path d="M7.2 8.6L8.2 9.5L15.2 1" />
    </svg>
  );
}

function Tail({ out }: { out: boolean }) {
  return (
    <svg
      viewBox="0 0 8 13"
      className={
        out
          ? "absolute left-full top-0 h-[13px] w-2 text-[#144d37]"
          : "absolute right-full top-0 h-[13px] w-2 -scale-x-100 text-[#242626]"
      }
    >
      <path fill="currentColor" d="M5.188 0H0v11.193l6.467-8.625C7.526 1.156 6.958 0 5.188 0z" />
    </svg>
  );
}

function Bubble({ out, tail, text, time, gap, wide }: Omit<Message, "kind">) {
  return (
    <div className={`flex ${out ? "justify-end" : "justify-start"} ${gap ? "mt-3" : ""}`}>
      <div
        className={`relative max-w-[65%] rounded-lg px-[9px] pb-2 pt-[6px] text-[13px] font-medium leading-[19px] text-[#fafafa] shadow-[0_1px_0_rgba(11,20,26,0.13)] ${
          out ? "bg-[#144d37]" : "bg-[#242626]"
        } ${wide ? "w-full" : ""} ${tail ? (out ? "rounded-tr-none" : "rounded-tl-none") : ""}`}
      >
        {tail && <Tail out={out} />}
        <p className="whitespace-pre-wrap">
          {text}
          {time && !wide && <span className={`inline-block ${out ? "w-[65px]" : "w-[47px]"}`} />}
        </p>
        {time && (
          <span
            className={`absolute bottom-[3px] right-[7px] flex items-center gap-1 font-['Open_Sans','Noto_Sans',sans-serif] text-[11px] font-normal leading-[15px] ${
              out ? "text-[#a1b8af]" : "text-[#a2a3a3]"
            }`}
          >
            <time>{time}</time>
            {out && <Ticks />}
          </span>
        )}
      </div>
    </div>
  );
}

function DateChip({ label }: { label: string }) {
  return (
    <div className="mb-[13px] mt-3 flex justify-center pr-1">
      <span className="rounded-lg bg-[#1d1f1f] px-3 text-[11px] font-semibold leading-[23px] text-[#a2a3a3]">
        {label}
      </span>
    </div>
  );
}

/* ---------- page ---------- */

export default function App() {
  return (
    <div className="flex h-screen bg-[#161717] pl-px">
      <div className="relative flex min-w-0 flex-1 flex-col overflow-hidden border-l border-r border-t border-l-[#343636] border-r-[#2a2c2c] border-t-[#1b1c26] bg-[#161717] font-['Noto_Sans','Open_Sans',sans-serif] text-[#fafafa]">
        <Wallpaper />

        <header className="relative flex h-16 shrink-0 items-center bg-[#161717] pl-4 pr-4">
          <span className="flex size-10 items-center justify-center rounded-full border border-[#343636] bg-[#242626] text-[#a5a6a6]">
            <svg viewBox="0 0 16 16" className="size-4" fill="currentColor">
              <circle cx="8" cy="3.8" r="3.8" />
              <path d="M0.3 14.2C0.3 10.6 3.6 9 8 9s7.7 1.6 7.7 5.2c0 1.2-.7 1.8-1.7 1.8H2c-1 0-1.7-.6-1.7-1.8z" />
            </svg>
          </span>
          <h1 className="ml-[15px] flex-1 font-['Open_Sans','Noto_Sans',sans-serif] text-[15px] font-semibold leading-5">
            Baruch De Ruiter
          </h1>
          <button type="button" aria-label="Search" className="flex size-10 items-center justify-center">
            <svg viewBox="0 0 24 24" className="size-6" fill="currentColor">
              <path d="M15.5 14h-.79l-.28-.27A6.47 6.47 0 0 0 16 9.5 6.5 6.5 0 1 0 9.5 16c1.61 0 3.09-.59 4.23-1.57l.27.28v.79l5 4.99L20.49 19l-4.99-5zm-6 0C7.01 14 5 11.99 5 9.5S7.01 5 9.5 5 14 7.01 14 9.5 11.99 14 9.5 14z" />
            </svg>
          </button>
          <button type="button" aria-label="Menu" className="ml-[10px] flex size-10 items-center justify-center">
            <svg viewBox="0 0 24 24" className="size-6" fill="currentColor">
              <circle cx="12" cy="6" r="2" />
              <circle cx="12" cy="12" r="2" />
              <circle cx="12" cy="18" r="2" />
            </svg>
          </button>
        </header>

        <main className="relative min-h-0 flex-1 overflow-hidden pl-[62px] pr-[67px]">
          <div className="-mt-[9px]">
            <Bubble out={false} tail={false} text="provide" time="4:57 AM" />
          </div>
          {thread.map((item, i) =>
            item.kind === "date" ? (
              <DateChip key={i} label={item.label} />
            ) : (
              <div key={i} className={i > 0 && item.out && !item.tail ? "pt-[2px]" : ""}>
                <Bubble {...item} />
              </div>
            ),
          )}

          <div aria-hidden="true" className="absolute inset-y-0 right-0 flex w-[10px] flex-col items-center py-[3px]">
            <svg viewBox="0 0 6 4" className="h-1 w-[6px]" fill="#3c3e3e">
              <path d="M3 0L6 4H0z" />
            </svg>
            <span className="w-[6px] flex-[388]" />
            <span className="w-[6px] flex-[131] rounded-full bg-[#3c3e3e]" />
            <span className="w-[6px] flex-[261]" />
            <svg viewBox="0 0 6 4" className="h-1 w-[6px]" fill="#4a4c4c">
              <path d="M3 4L6 0H0z" />
            </svg>
          </div>

          <button
            type="button"
            aria-label="Scroll to bottom"
            className="absolute bottom-[17px] right-[11px] flex size-11 items-center justify-center rounded-full bg-[#242626] text-[#a5a6a6]"
          >
            <svg viewBox="0 0 24 24" className="size-6" fill="none" stroke="currentColor" strokeWidth={2}>
              <path d="M4.8 8.4L12 15.6L19.2 8.4" />
            </svg>
          </button>
        </main>

        <footer className="relative shrink-0 px-3 pb-3">
          <form
            className="flex h-[52px] items-center rounded-full bg-[#242626] px-[6px]"
            onSubmit={(e) => e.preventDefault()}
          >
            <button type="button" aria-label="Attach" className="flex size-10 items-center justify-center">
              <svg viewBox="0 0 24 24" className="size-6" fill="none" stroke="currentColor" strokeWidth={2}>
                <path d="M12 4.5V19.5M4.5 12H19.5" />
              </svg>
            </button>
            <button type="button" aria-label="Emojis and stickers" className="flex size-10 items-center justify-center">
              <svg viewBox="0 0 24 24" className="size-6" fill="none" stroke="currentColor" strokeWidth={2}>
                <path d="M8.5 3H15.5Q21 3 21 8.5V13.5C21 14.8 20.6 15.7 19.8 16.5L16.5 19.8C15.7 20.6 14.8 21 13.5 21H8.5Q3 21 3 15.5V8.5Q3 3 8.5 3Z" />
                <path d="M20.6 13.5H18C15.5 13.5 13.8 15 13.8 17.5V20.6" strokeWidth="1.5" />
                <path d="M6.8 12.8C7 15.6 9.4 17.4 13.6 16.8L14.8 14.2C11.6 14.4 9.4 13.8 6.8 12.8Z" fill="currentColor" strokeWidth="0.6" />
                <circle cx="8.5" cy="9" r="1.5" fill="currentColor" stroke="none" />
                <circle cx="15.5" cy="9" r="1.5" fill="currentColor" stroke="none" />
              </svg>
            </button>
            <input
              type="text"
              aria-label="Type a message"
              placeholder="Type a message"
              className="ml-[6px] min-w-0 flex-1 bg-transparent text-sm leading-5 outline-none placeholder:text-[#a2a3a3]"
            />
            <button type="button" aria-label="Voice message" className="flex size-10 items-center justify-center">
              <svg viewBox="0 0 24 24" className="size-6" fill="none" stroke="currentColor" strokeWidth={2}>
                <rect x="9.5" y="3" width="5" height="11" rx="2.5" />
                <path d="M6 11.5C6 15 8.6 17.2 12 17.2S18 15 18 11.5M12 17V21.2" />
              </svg>
            </button>
          </form>
        </footer>
      </div>
    </div>
  );
}
